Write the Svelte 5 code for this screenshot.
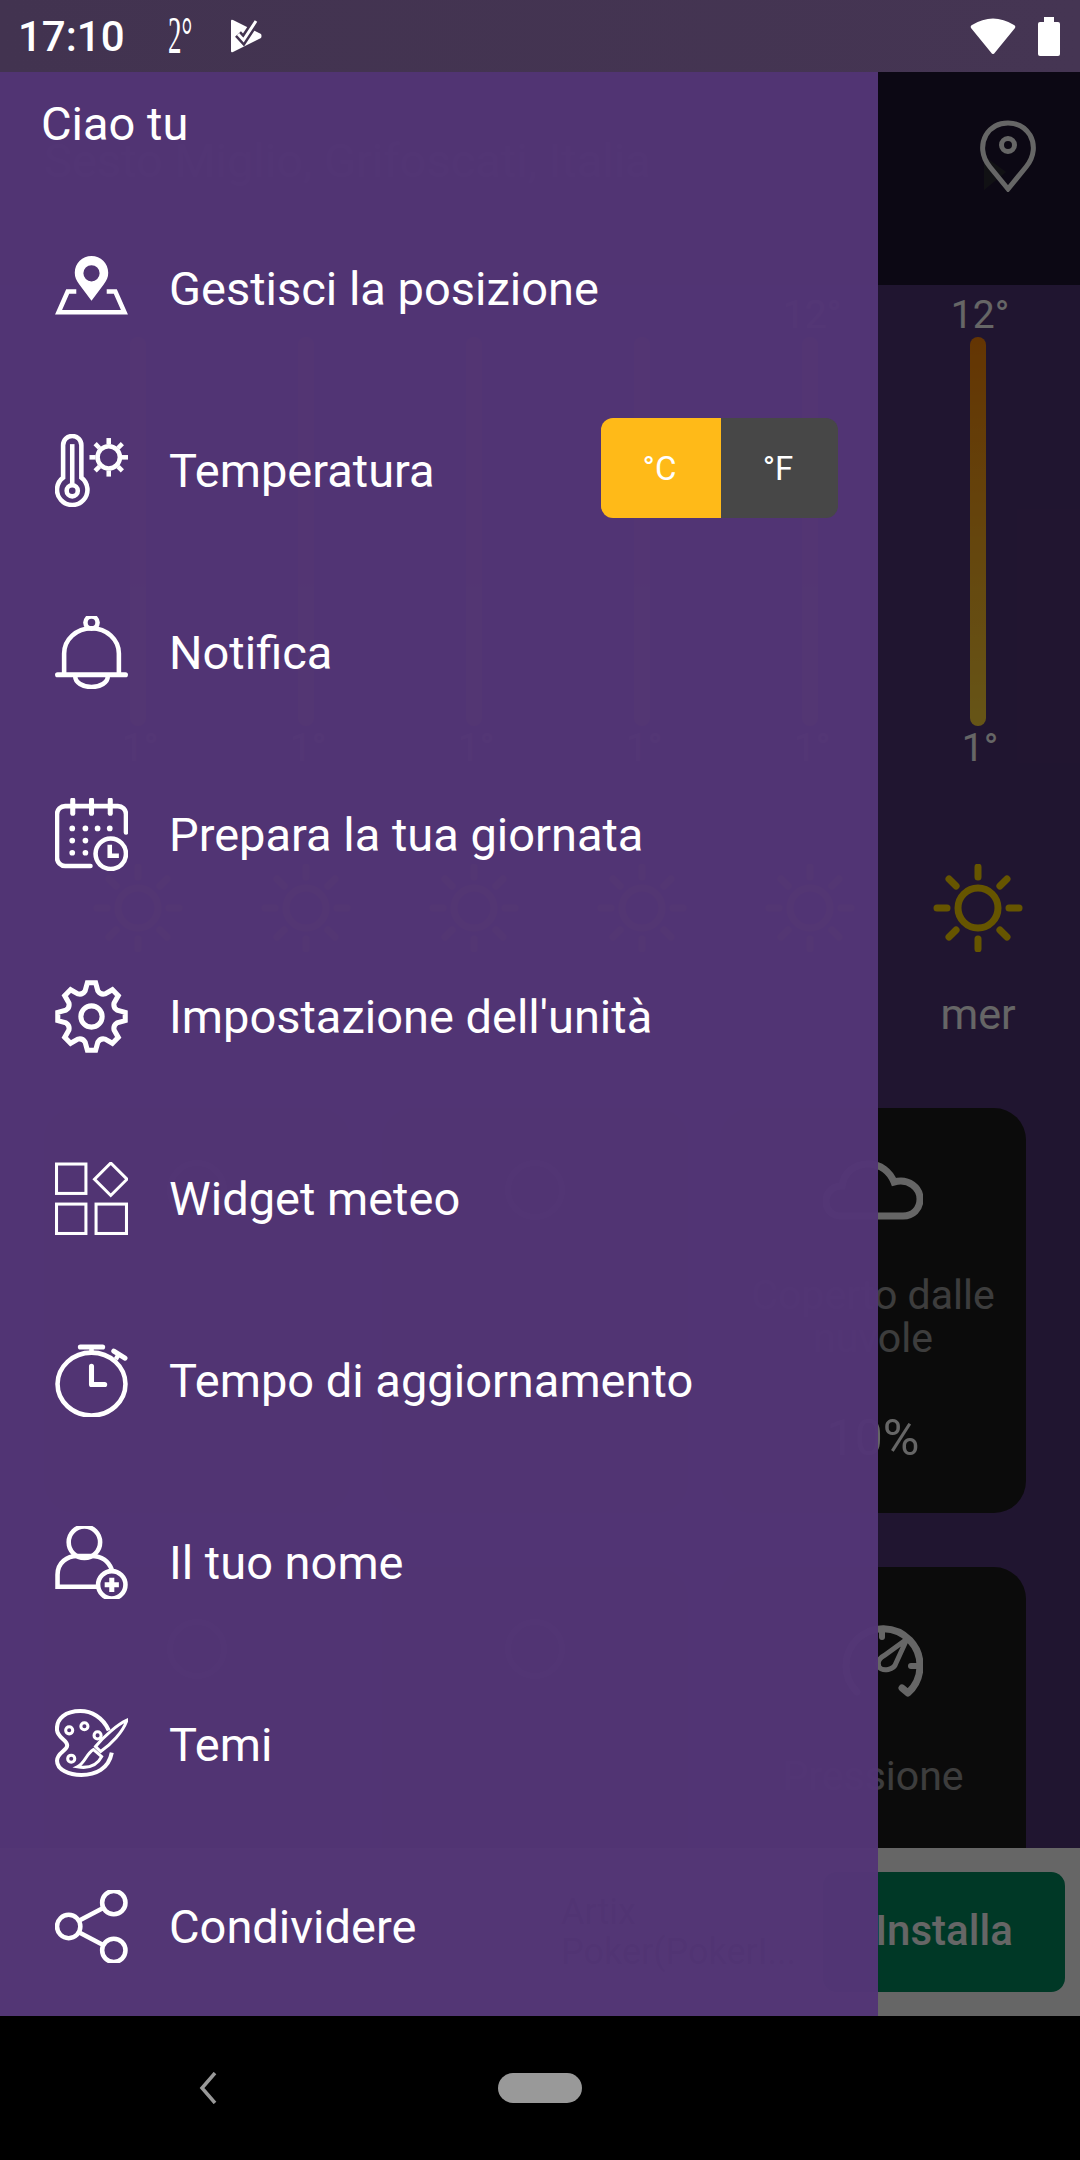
<script>
  const menu = [
    { id: 'map', label: 'Gestisci la posizione' },
    { id: 'thermo', label: 'Temperatura' },
    { id: 'bell', label: 'Notifica' },
    { id: 'calendar', label: 'Prepara la tua giornata' },
    { id: 'gear', label: "Impostazione dell'unità" },
    { id: 'widget', label: 'Widget meteo' },
    { id: 'watch', label: 'Tempo di aggiornamento' },
    { id: 'user', label: 'Il tuo nome' },
    { id: 'palette', label: 'Temi' },
    { id: 'share', label: 'Condividere' }
  ];

  const days = [
    { name: '' },
    { name: '' },
    { name: '' },
    { name: '' },
    { name: '', high: '12°' },
    { name: 'mer', high: '12°' }
  ];
  const rays = [0, 45, 90, 135, 180, 225, 270, 315];

  let polar = (r, deg) => {
    let a = ((deg - 90) * Math.PI) / 180;
    return `${(36 + r * Math.cos(a)).toFixed(2)} ${(36 + r * Math.sin(a)).toFixed(2)}`;
  };

  // eight teeth, rounded valleys between them
  let gearPath = () => {
    let d = `M${polar(26, -14)}`;
    for (let i = 0; i < 8; i++) {
      let a = i * 45;
      d += ` L${polar(33.5, a - 7)} L${polar(33.5, a + 7)} L${polar(26, a + 14)}`;
      d += ` Q${polar(23, a + 22.5)} ${polar(26, a + 31)}`;
    }
    return d + ' Z';
  };
</script>

<div class="phone">
  <header class="status">
    <span class="time">17:10</span>
    <span class="temp">2°</span>
    <svg class="play" viewBox="0 0 32 34" width="32" height="34">
      <path d="M1 2 Q1 0 3 1 L31 15 Q32 17 31 19 L3 33 Q1 34 1 32 Z" fill="#fff" />
      <path d="M8 15 L13.500 21 L26 2" fill="none" stroke="#433450" stroke-width="8" />
      <path d="M8 15 L13.500 21 L26 2" fill="none" stroke="#fff" stroke-width="3" />
    </svg>
    <span class="spacer"></span>
    <svg class="wifi" viewBox="0 0 46 36" width="46" height="36">
      <path d="M23 36 Q22 36 21 34.5 L1 10 Q0 8 2 7 Q23 -6 44 7 Q46 8 45 10 L25 34.5 Q24 36 23 36 Z" fill="#fff" />
    </svg>
    <div class="battery"></div>
  </header>

  <div class="stage">
    <div class="page">
      <div class="topbar">
        <span class="place">Sesto Miglio, Grifoscati, Italia</span>
        <svg class="pin" viewBox="0 0 56 72" width="56" height="72">
          <path d="M4 36 L26 52 L4 70 Z" fill="#2c2c34" />
          <path d="M28 69 L10 47 C1 36 1 24 6 15 C11 7 19 3 28 3 C37 3 45 7 50 15 C55 24 55 36 46 47 Z" fill="none" stroke="#fff" stroke-width="5" />
          <circle cx="28" cy="25" r="6.5" fill="none" stroke="#fff" stroke-width="5" />
        </svg>
      </div>

      <div class="scroll">
        <div class="forecast">
          {#each days as day}
            <div class="day">
              <span class="deg">{day.high ?? ''}</span>
              <div class="bar"></div>
              <span class="deg">1°</span>
              <svg class="sun" viewBox="0 0 90 88" width="90" height="88">
                <circle cx="45" cy="44" r="20" fill="none" stroke="#ffd500" stroke-width="7" />
                {#each rays as r}
                  <line x1="45" y1="3" x2="45" y2="13" stroke="#ffd500" stroke-width="7" stroke-linecap="round" transform="rotate({r} 45 44)" />
                {/each}
              </svg>
              <span class="name">{day.name}</span>
            </div>
          {/each}
        </div>

        <div class="cards">
          <div class="card">
            <span class="shape"></span>
          </div>
          <div class="card">
            <span class="shape"></span>
          </div>
          <div class="card">
            <svg viewBox="0 0 100 60" width="100" height="60">
              <path d="M18 56 C8 56 3 49 3 41 C3 32 10 26 19 26 C21 12 32 4 45 4 C58 4 67 12 71 22 C86 18 97 28 97 39 C97 49 90 56 80 56 Z" fill="none" stroke="#fff" stroke-width="7" />
            </svg>
            <p>Coperto dalle nuvole</p>
            <b>10%</b>
          </div>
          <div class="card">
            <span class="shape"></span>
          </div>
          <div class="card">
            <span class="shape"></span>
          </div>
          <div class="card">
            <svg viewBox="0 0 100 80" width="100" height="80">
              <path d="M34 73 A37 37 0 1 1 85 74 L79 69" fill="none" stroke="#fff" stroke-width="7" stroke-linecap="round" stroke-linejoin="round" />
              <path d="M84 20 L73 44 C71 51 60 53 56 48 C53 42 58 38 62 36 Z" fill="none" stroke="#fff" stroke-width="5" stroke-linejoin="round" />
              <line x1="59" y1="11" x2="59" y2="18" stroke="#fff" stroke-width="6" stroke-linecap="round" />
              <line x1="88" y1="47" x2="94" y2="47" stroke="#fff" stroke-width="6" stroke-linecap="round" />
            </svg>
            <p class="single">Pressione</p>
          </div>
        </div>
      </div>

      <div class="ad">
        <div class="ad-icon"></div>
        <div class="ad-title">Artix<br />Poker(PokerI...</div>
        <div class="install">Installa</div>
      </div>
    </div>

    <div class="scrim"></div>

    <aside class="drawer">
      <div class="hello">Ciao tu</div>
      {#each menu as item}
        <div class="row">
          <svg class="icon" viewBox="0 0 72 72" width="73" height="73">
            {#if item.id === 'map'}
              <path fill-rule="evenodd" stroke="none" fill="#fff" d="M36 48 L24 32 C21 28 19.500 25 19.500 20.500 C19.500 11 27 4 36 4 C45 4 52.500 11 52.500 20.500 C52.500 25 51 28 48 32 Z M36 13 A8 8 0 1 0 36 29 A8 8 0 1 0 36 13 Z" />
              <path d="M21 39 H12.500 L3.500 59.500 H68.500 L59.500 39 H51" />
            {:else if item.id === 'thermo'}
              <path d="M8 43 V11 a9 9 0 0 1 18 0 V43 a15 15 0 1 1 -18 0 Z" />
              <line x1="17" y1="10" x2="17" y2="50" />
              <circle cx="17" cy="56" r="5.500" />
              <circle cx="53" cy="23" r="11" />
              {#each rays as r}
                <line x1="53" y1="4" x2="53" y2="10" transform="rotate({r} 53 23)" />
              {/each}
            {:else if item.id === 'bell'}
              <path d="M9 58 V37 a27 25 0 0 1 54 0 V58" />
              <line x1="2.500" y1="58" x2="69.500" y2="58" stroke-linecap="round" stroke-width="5" />
              <circle cx="36" cy="6.500" r="6" />
              <path d="M20 60 a16 10 0 0 0 32 0" />
            {:else if item.id === 'calendar'}
              <path d="M35 67 H10 a8 8 0 0 1 -8 -8 V16 a8 8 0 0 1 8 -8 H62 a8 8 0 0 1 8 8 V34" stroke-linecap="round" />
              <line x1="17.500" y1="2" x2="17.500" y2="15" stroke-linecap="round" stroke-width="5" />
              <line x1="36" y1="2" x2="36" y2="15" stroke-linecap="round" stroke-width="5" />
              <line x1="54.500" y1="2" x2="54.500" y2="15" stroke-linecap="round" stroke-width="5" />
              <g fill="#fff" stroke="none">
                <circle cx="17" cy="30" r="2.800" /><circle cx="30" cy="30" r="2.800" />
                <circle cx="42" cy="30" r="2.800" /><circle cx="54" cy="30" r="2.800" />
                <circle cx="17" cy="42" r="2.800" /><circle cx="30" cy="42" r="2.800" />
                <circle cx="17" cy="54" r="2.800" /><circle cx="30" cy="54" r="2.800" />
              </g>
              <circle cx="55" cy="55" r="15" />
              <path d="M54 46 V57 H63" />
            {:else if item.id === 'gear'}
              <path d={gearPath()} stroke-width="5" />
              <circle cx="36" cy="36" r="10.500" stroke-width="5" />
            {:else if item.id === 'widget'}
              <g stroke-width="3">
                <rect x="1.500" y="2" width="29" height="29" />
                <rect x="1.500" y="41.500" width="29" height="29" />
                <rect x="40.500" y="41.500" width="30" height="29" />
                <path d="M55 1 L71 17 L55 33 L39 17 Z" />
              </g>
            {:else if item.id === 'watch'}
              <ellipse cx="36" cy="39.500" rx="33.500" ry="31" />
              <line x1="25" y1="3" x2="47" y2="3" stroke-linecap="round" stroke-width="5" />
              <line x1="36" y1="3" x2="36" y2="8" />
              <line x1="58" y1="7" x2="69" y2="14" stroke-linecap="round" stroke-width="5" />
              <line x1="63" y1="10" x2="60" y2="15" />
              <path d="M36 22 V40 H49" stroke-linecap="round" stroke-linejoin="round" stroke-width="5" />
            {:else if item.id === 'user'}
              <circle cx="29" cy="16" r="15.500" />
              <path d="M42 60 H2.500 V48 C2.500 36 12 29.500 22 29.500 H36 C46 29.500 53 35 56 43" />
              <circle cx="56" cy="58" r="13.500" />
              <path d="M56 51 V65 M49 58 H63" stroke-width="5" />
            {:else if item.id === 'palette'}
              <path d="M53 22 C47 9 36 3 25 3 C11 3 1 10 2 22 C3 30 12 31 12 37 C12 42 2 44 2 52 C2 61 14 66 26 66 C40 66 53 60 56 44" stroke-width="4" />
              <g stroke-width="3">
                <circle cx="14" cy="22" r="3.500" />
                <circle cx="29" cy="18" r="3.500" />
                <circle cx="42" cy="27" r="3.500" />
                <circle cx="16" cy="50" r="3.500" />
                <path d="M71 12 C62 16 48 28 40 38 L45 43 C55 36 67 24 71 12 Z" />
                <path d="M38 41 L46 48 C42 56 34 60 22 58 C30 54 30 46 38 41 Z" />
              </g>
            {:else if item.id === 'share'}
              <circle cx="58" cy="12.500" r="11.500" />
              <circle cx="13.500" cy="36" r="11.500" />
              <circle cx="58" cy="59.500" r="11.500" />
              <line x1="24" y1="30" x2="47" y2="18" />
              <line x1="24" y1="42" x2="47" y2="54" />
            {/if}
          </svg>
          <span class="label">{item.label}</span>
          {#if item.id === 'thermo'}
            <div class="units">
              <span class="unit on">°C</span>
              <span class="unit">°F</span>
            </div>
          {/if}
        </div>
      {/each}
    </aside>
  </div>

  <footer class="nav">
    <svg class="back" viewBox="0 0 18 32" width="18" height="32">
      <path d="M16 1 L3 16 L16 31" fill="none" stroke="#999" stroke-width="3.500" />
    </svg>
    <div class="home"></div>
  </footer>
</div>

<style>
  :global(body) {
    margin: 0;
    background: #000;
  }

  .phone {
    width: 1080px;
    height: 2160px;
    display: flex;
    flex-direction: column;
    overflow: hidden;
    font-family: Roboto, sans-serif;
    color: #fff;
  }

  .status {
    height: 72px;
    flex: none;
    display: flex;
    align-items: center;
    padding: 0 20px 0 18px;
    background: linear-gradient(90deg, #423350, #453553);
  }

  .time {
    font-size: 42px;
    font-weight: 500;
    width: 150px;
  }

  .temp {
    display: inline-block;
    width: 62px;
    font-family: 'Liberation Serif', serif;
    font-size: 52px;
    line-height: 52px;
    transform: scaleX(0.52);
    transform-origin: left center;
  }

  .spacer {
    flex: 1;
  }

  .wifi {
    margin-right: 22px;
    margin-top: -1px;
  }

  .battery {
    position: relative;
    width: 22px;
    height: 34px;
    margin-top: 5px;
    background: #fff;
    border-radius: 2px;
  }

  .battery::before {
    content: '';
    position: absolute;
    left: 6px;
    top: -5px;
    width: 10px;
    height: 5px;
    background: #fff;
  }

  .stage {
    position: relative;
    height: 1944px;
    flex: none;
    overflow: hidden;
  }

  .page {
    height: 100%;
    display: flex;
    flex-direction: column;
    background: #523578;
  }

  .topbar {
    height: 213px;
    flex: none;
    display: flex;
    align-items: flex-start;
    justify-content: space-between;
    box-sizing: border-box;
    padding: 48px 44px 0 44px;
    background: #201632;
  }

  .place {
    font-size: 47px;
    line-height: 20px;
    margin-top: 31px;
    white-space: nowrap;
    opacity: 0.6;
  }

  .pin {
    display: block;
  }

  .scroll {
    flex: 1;
    overflow: hidden;
  }

  .forecast {
    display: grid;
    grid-template-columns: repeat(6, 168px);
    padding: 8px 0 0 54px;
  }

  .day {
    display: flex;
    flex-direction: column;
    align-items: center;
  }

  .deg {
    height: 44px;
    font-size: 39px;
    line-height: 44px;
    padding-left: 4px;
  }

  .bar {
    width: 16px;
    height: 389px;
    border-radius: 8px;
    background: linear-gradient(180deg, #fa8508, #ffd43a);
  }

  .sun {
    display: block;
    margin-top: 94px;
  }

  .name {
    margin-top: 40px;
    height: 44px;
    font-size: 43px;
    line-height: 44px;
  }

  .cards {
    display: grid;
    grid-template-columns: repeat(3, 306px);
    column-gap: 32px;
    row-gap: 54px;
    padding: 72px 0 0 44px;
  }

  .card {
    height: 405px;
    box-sizing: border-box;
    display: flex;
    flex-direction: column;
    align-items: center;
    padding-top: 52px;
    border-radius: 32px;
    background: #1c1c1c;
  }

  .card svg {
    display: block;
    flex: none;
  }

  .shape {
    width: 60px;
    height: 60px;
    flex: none;
    border: 6px solid #fff;
    border-radius: 50%;
    box-sizing: border-box;
    opacity: 0.5;
  }

  .card p {
    margin: 54px 0 0;
    height: 86px;
    font-size: 41px;
    line-height: 43px;
    text-align: center;
    opacity: 0.55;
  }

  .card p.single {
    margin-top: 56px;
  }

  .card b {
    margin-top: 50px;
    font-size: 50px;
    font-weight: 400;
    line-height: 56px;
  }

  .ad {
    height: 168px;
    flex: none;
    display: flex;
    align-items: center;
    background: #fff;
    color: #000;
    padding: 0 15px 0 413px;
    box-sizing: border-box;
  }

  .ad-icon {
    width: 135px;
    height: 100px;
    flex: none;
    border-radius: 12px;
    background: #e8e8e8;
  }

  .ad-title {
    margin-left: 13px;
    font-size: 36px;
    line-height: 40px;
    width: 262px;
    white-space: nowrap;
  }

  .install {
    width: 242px;
    height: 120px;
    flex: none;
    display: flex;
    align-items: center;
    justify-content: center;
    padding-bottom: 3px;
    box-sizing: border-box;
    border-radius: 14px;
    background: #008c5f;
    color: #fff;
    font-size: 42px;
    font-weight: 500;
  }

  .scrim {
    position: absolute;
    inset: 0;
    background: rgba(0, 0, 0, 0.6);
  }

  .drawer {
    position: absolute;
    left: 0;
    top: 0;
    width: 878px;
    height: 100%;
    overflow: hidden;
    background: rgba(83, 53, 118, 0.975);
  }

  .hello {
    height: 125px;
    box-sizing: border-box;
    padding: 26px 0 0 41px;
    font-size: 47px;
    line-height: 52px;
  }

  .row {
    height: 182.1px;
    display: flex;
    align-items: center;
    padding: 0 40px 0 55px;
  }

  .icon {
    flex: none;
    fill: none;
    stroke: #fff;
    stroke-width: 4.5;
  }

  .label {
    margin-left: 41px;
    flex: 1;
    font-size: 47px;
    white-space: nowrap;
  }

  .units {
    display: flex;
    height: 100px;
    margin-bottom: 4px;
    border-radius: 12px;
    overflow: hidden;
    font-size: 33px;
  }

  .unit {
    width: 117px;
    display: flex;
    align-items: center;
    justify-content: center;
    padding-right: 3px;
    box-sizing: border-box;
    background: #474747;
  }

  .unit.on {
    width: 120px;
    background: #ffba18;
  }

  .nav {
    height: 144px;
    flex: none;
    display: flex;
    align-items: center;
    background: #000;
    padding-left: 199px;
  }

  .back {
    display: block;
  }

  .home {
    width: 84px;
    height: 30px;
    margin-left: 281px;
    border-radius: 15px;
    background: #999;
  }
</style>
